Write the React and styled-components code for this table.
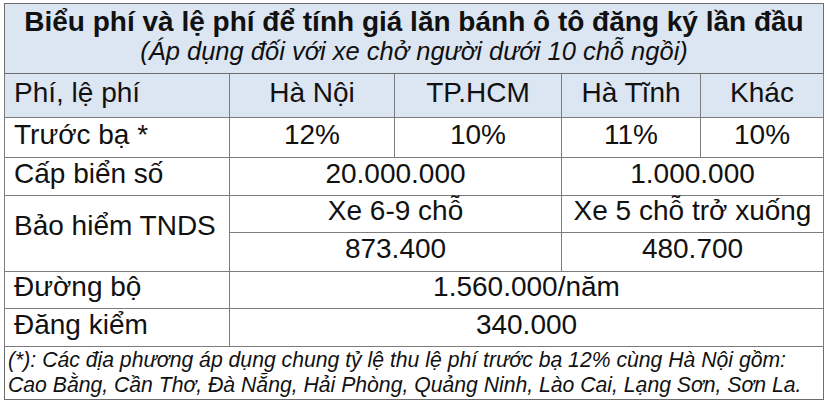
import React from 'react'
import styled, { createGlobalStyle } from 'styled-components'

const GlobalStyle = createGlobalStyle`
  html, body {
    margin: 0;
    padding: 0;
    background: #ffffff;
  }
  body {
    font-family: "Liberation Sans", Arial, sans-serif;
    color: #111;
  }
`

const Page = styled.div`
  padding: 3px 4px;
`

const Table = styled.table`
  width: 819px;
  table-layout: fixed;
  border-collapse: collapse;
  border: 1.5px solid #6d6d6d;
  font-size: 28px;
`

const Row = styled.tr`
  height: ${p => p.$h}px;
`

const Cell = styled.td`
  border: 1.5px solid #7c7c7c;
  padding: 0 0 ${p => p.$lift || 6}px ${p => (p.$left ? '9px' : '0')};
  text-align: ${p => (p.$left ? 'left' : 'center')};
  vertical-align: middle;
  background: ${p => (p.$head ? '#dce6f2' : '#ffffff')};
  line-height: 28px;
  white-space: nowrap;
`

const TitleCell = styled.td`
  border: 1.5px solid #6d6d6d;
  background: #dce6f2;
  text-align: center;
  vertical-align: middle;
  padding: 0 0 6px;
`

const Title = styled.div`
  font-weight: bold;
  font-size: 28px;
  line-height: 30px;
`

const Subtitle = styled.div`
  font-style: italic;
  font-size: 25.5px;
  line-height: 28px;
`

const NoteCell = styled.td`
  border: 1.5px solid #6d6d6d;
  font-style: italic;
  font-size: 21.2px;
  line-height: 25px;
  padding: 0 0 2px 3px;
  white-space: nowrap;
`

export default function App() {
  return (
    <Page>
      <GlobalStyle />
      <Table>
        <colgroup>
          <col style={{ width: 225 }} />
          <col style={{ width: 165 }} />
          <col style={{ width: 167 }} />
          <col style={{ width: 139 }} />
          <col style={{ width: 123 }} />
        </colgroup>
        <tbody>
          <Row $h={70}>
            <TitleCell colSpan={5}>
              <Title>Biểu phí và lệ phí để tính giá lăn bánh ô tô đăng ký lần đầu</Title>
              <Subtitle>(Áp dụng đối với xe chở người dưới 10 chỗ ngồi)</Subtitle>
            </TitleCell>
          </Row>
          <Row $h={44}>
            <Cell $head $left>Phí, lệ phí</Cell>
            <Cell $head>Hà Nội</Cell>
            <Cell $head>TP.HCM</Cell>
            <Cell $head>Hà Tĩnh</Cell>
            <Cell $head>Khác</Cell>
          </Row>
          <Row $h={40}>
            <Cell $left>Trước bạ *</Cell>
            <Cell>12%</Cell>
            <Cell>10%</Cell>
            <Cell>11%</Cell>
            <Cell>10%</Cell>
          </Row>
          <Row $h={38}>
            <Cell $left>Cấp biển số</Cell>
            <Cell colSpan={2}>20.000.000</Cell>
            <Cell colSpan={2}>1.000.000</Cell>
          </Row>
          <Row $h={37}>
            <Cell $left $lift={16} rowSpan={2}>Bảo hiểm TNDS</Cell>
            <Cell colSpan={2}>Xe 6-9 chỗ</Cell>
            <Cell colSpan={2}>Xe 5 chỗ trở xuống</Cell>
          </Row>
          <Row $h={39}>
            <Cell colSpan={2}>873.400</Cell>
            <Cell colSpan={2}>480.700</Cell>
          </Row>
          <Row $h={37}>
            <Cell $left>Đường bộ</Cell>
            <Cell colSpan={4}>1.560.000/năm</Cell>
          </Row>
          <Row $h={38}>
            <Cell $left>Đăng kiểm</Cell>
            <Cell colSpan={4}>340.000</Cell>
          </Row>
          <Row $h={51}>
            <NoteCell colSpan={5}>
              (*): Các địa phương áp dụng chung tỷ lệ thu lệ phí trước bạ 12% cùng Hà Nội gồm:
              <br />
              Cao Bằng, Cần Thơ, Đà Nẵng, Hải Phòng, Quảng Ninh, Lào Cai, Lạng Sơn, Sơn La.
            </NoteCell>
          </Row>
        </tbody>
      </Table>
    </Page>
  )
}
